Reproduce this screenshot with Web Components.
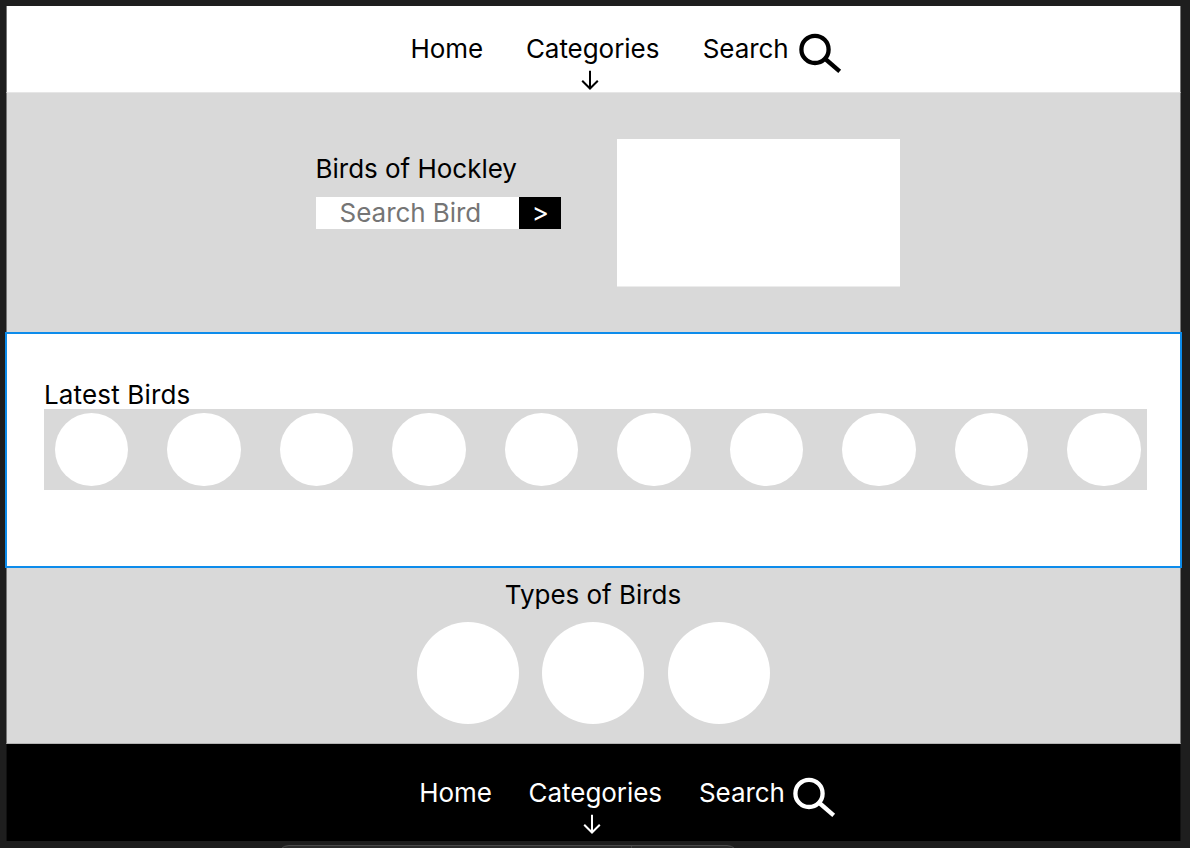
<!DOCTYPE html>
<html lang="en">
<head>
<meta charset="utf-8">
<title>Birds of Hockley</title>
<style>
    body {
        margin: 0;
        height: 848px;
        overflow: hidden;
        background: #1e1e1e;
        font-family: Inter, "Liberation Sans", sans-serif;
        font-size: 26px;
        line-height: 32px;
        color: #000;
    }
    .site-footer {
        --nav-bg: #000;
        --nav-color: #fff;
        --nav-height: 97px;
        --nav-left: 412.3px;
        --nav-top: 33px;
        --home-width: 109.3px;
        --categories-width: 170.3px;
        --arrow-left: 54.6px;
        --icon-width: 93.2px;
        --icon-top: -0.2px;
    }
</style>
</head>
<body>
<bird-page>
    <nav-bar></nav-bar>
    <bird-hero heading="Birds of Hockley"></bird-hero>
    <latest-birds count="10">Latest Birds</latest-birds>
    <bird-types count="3">Types of Birds</bird-types>
    <nav-bar class="site-footer"></nav-bar>
</bird-page>
<tool-dock></tool-dock>

<script>
const pageTemplate = document.createElement('template')
pageTemplate.innerHTML = `
    <style>
        :host {
            display: flex;
            flex-direction: column;
            box-sizing: border-box;
            width: 1175px;
            height: 841px;
            margin-left: 6px;
            padding-top: 6px;
        }
    </style>
    <slot></slot>
`

const navTemplate = document.createElement('template')
navTemplate.innerHTML = `
    <style>
        :host {
            display: block;
            flex: none;
            box-sizing: border-box;
            height: var(--nav-height, 87px);
            border: 0 solid #777;
            border-width: 0 1px;
            background: var(--nav-bg, #fff);
            color: var(--nav-color, #000);
        }
        :host(:not(.site-footer)) {
            border-bottom: 1px solid #e6e6e6;
        }
        :host(.site-footer) {
            border-color: #111;
        }
        nav {
            display: grid;
            grid-template-columns: var(--home-width, 115.5px) var(--categories-width, 176.8px) var(--icon-width, 95px) auto;
            justify-content: start;
            padding: var(--nav-top, 27px) 0 0 var(--nav-left, 403.4px);
            white-space: nowrap;
        }
        span {
            letter-spacing: -0.05px;
        }
        svg {
            display: block;
            fill: none;
            stroke: currentColor;
        }
        .arrow {
            margin: 5px 0 0 var(--arrow-left, 55px);
            stroke-width: 2;
        }
        .glass {
            margin-top: var(--icon-top, 0);
            stroke-width: 4.3;
        }
    </style>
    <nav>
        <span>Home</span>
        <div>
            <span>Categories</span>
            <svg class="arrow" width="18" height="20" viewBox="0 0 18 20"><path d="M9 .8V18.5M1.2 10.7L9 18.5L16.8 10.7"/></svg>
        </div>
        <span>Search</span>
        <svg class="glass" width="44" height="40" viewBox="0 0 44 40"><circle cx="17" cy="16.4" r="13.6"/><path d="M26.8 25.5L41.7 38.3"/></svg>
    </nav>
`

const heroTemplate = document.createElement('template')
heroTemplate.innerHTML = `
    <style>
        :host {
            display: flex;
            flex: none;
            align-items: flex-start;
            box-sizing: border-box;
            height: 239px;
            padding: 46px 0 0 308.6px;
            border: 0 solid #777;
            border-width: 0 1px;
            background: #d9d9d9;
        }
        .intro {
            width: 301.4px;
            padding-top: 14px;
        }
        h1 {
            margin: 0 0 12px;
            font: inherit;
            letter-spacing: -0.03px;
        }
        form {
            display: flex;
            width: 245.4px;
            height: 32px;
            margin: 0;
        }
        label {
            flex: 1;
            padding-left: 24px;
            background: #fff;
            color: #757575;
            letter-spacing: -0.05px;
        }
        button {
            width: 41.5px;
            padding: 0;
            border: 0;
            background: #000;
            color: #fff;
            font: 26px/32px Inter, sans-serif;
        }
        .picture {
            width: 283px;
            height: 147px;
            border-bottom: 1px solid #ececec;
            background: #fff;
        }
    </style>
    <div class="intro">
        <h1></h1>
        <form>
            <label>Search Bird</label>
            <button type="button">&gt;</button>
        </form>
    </div>
    <div class="picture"></div>
`

const latestTemplate = document.createElement('template')
latestTemplate.innerHTML = `
    <style>
        :host {
            display: block;
            flex: none;
            box-sizing: border-box;
            width: 1177px;
            height: 236px;
            margin-left: -1px;
            padding: 45px 33px 0 37px;
            border: 2px solid #0d8ceb;
            background: #fff;
        }
        h2 {
            margin: 0;
            height: 30px;
            font: inherit;
            letter-spacing: 0.15px;
        }
        .strip {
            display: flex;
            justify-content: space-between;
            box-sizing: border-box;
            height: 81px;
            padding: 3.8px 6.1px 0 10.9px;
            background: #d9d9d9;
        }
        .bird {
            width: 73.5px;
            height: 73.5px;
            border-radius: 50%;
            background: #fff;
        }
    </style>
    <h2><slot></slot></h2>
    <div class="strip"></div>
`

const typesTemplate = document.createElement('template')
typesTemplate.innerHTML = `
    <style>
        :host {
            display: block;
            flex: none;
            box-sizing: border-box;
            height: 176px;
            padding: 11px 1px 0 0;
            border: 0 solid #777;
            border-width: 0 1px;
            border-bottom: 1px solid #b4b4b4;
            background: #d9d9d9;
        }
        h2 {
            margin: 0 0 11.4px;
            font: inherit;
            letter-spacing: -0.03px;
            text-align: center;
        }
        .row {
            display: flex;
            justify-content: center;
            gap: 23.5px;
        }
        .bird {
            width: 102px;
            height: 102px;
            border-radius: 50%;
            background: #fff;
        }
    </style>
    <h2><slot></slot></h2>
    <div class="row"></div>
`

const dockTemplate = document.createElement('template')
dockTemplate.innerHTML = `
    <style>
        :host {
            display: block;
            height: 7px;
            overflow: hidden;
        }
        .dock {
            display: flex;
            box-sizing: border-box;
            width: 462px;
            height: 40px;
            margin: 4px 0 0 277px;
            border: 1px solid #4b4b4b;
            border-radius: 12px;
            background: #2c2c2c;
        }
        .tools {
            width: 353px;
            border-right: 1px solid #444;
        }
    </style>
    <div class="dock"><div class="tools"></div></div>
`

class BaseElement extends HTMLElement {
    constructor(template) {
        super();
        this.attachShadow({mode: 'open'});
        this.shadowRoot.appendChild(template.content.cloneNode(true));
    }

    // fills a row with the number of circles given in the count attribute
    addBirds(selector) {
        const row = this.shadowRoot.querySelector(selector);
        for (let i = 0; i < Number(this.getAttribute('count')); i++) {
            const bird = document.createElement('div');
            bird.className = 'bird';
            row.appendChild(bird);
        }
    }
}

class BirdPage extends BaseElement {
    constructor() {
        super(pageTemplate);
    }
}

class NavBar extends BaseElement {
    constructor() {
        super(navTemplate);
    }
}

class BirdHero extends BaseElement {
    constructor() {
        super(heroTemplate);
    }

    connectedCallback() {
        this.shadowRoot.querySelector('h1').textContent = this.getAttribute('heading');
    }
}

class LatestBirds extends BaseElement {
    constructor() {
        super(latestTemplate);
    }

    connectedCallback() {
        this.addBirds('.strip');
    }
}

class BirdTypes extends BaseElement {
    constructor() {
        super(typesTemplate);
    }

    connectedCallback() {
        this.addBirds('.row');
    }
}

class ToolDock extends BaseElement {
    constructor() {
        super(dockTemplate);
    }
}

window.customElements.define('bird-page', BirdPage);
window.customElements.define('nav-bar', NavBar);
window.customElements.define('bird-hero', BirdHero);
window.customElements.define('latest-birds', LatestBirds);
window.customElements.define('bird-types', BirdTypes);
window.customElements.define('tool-dock', ToolDock);
</script>
</body>
</html>
